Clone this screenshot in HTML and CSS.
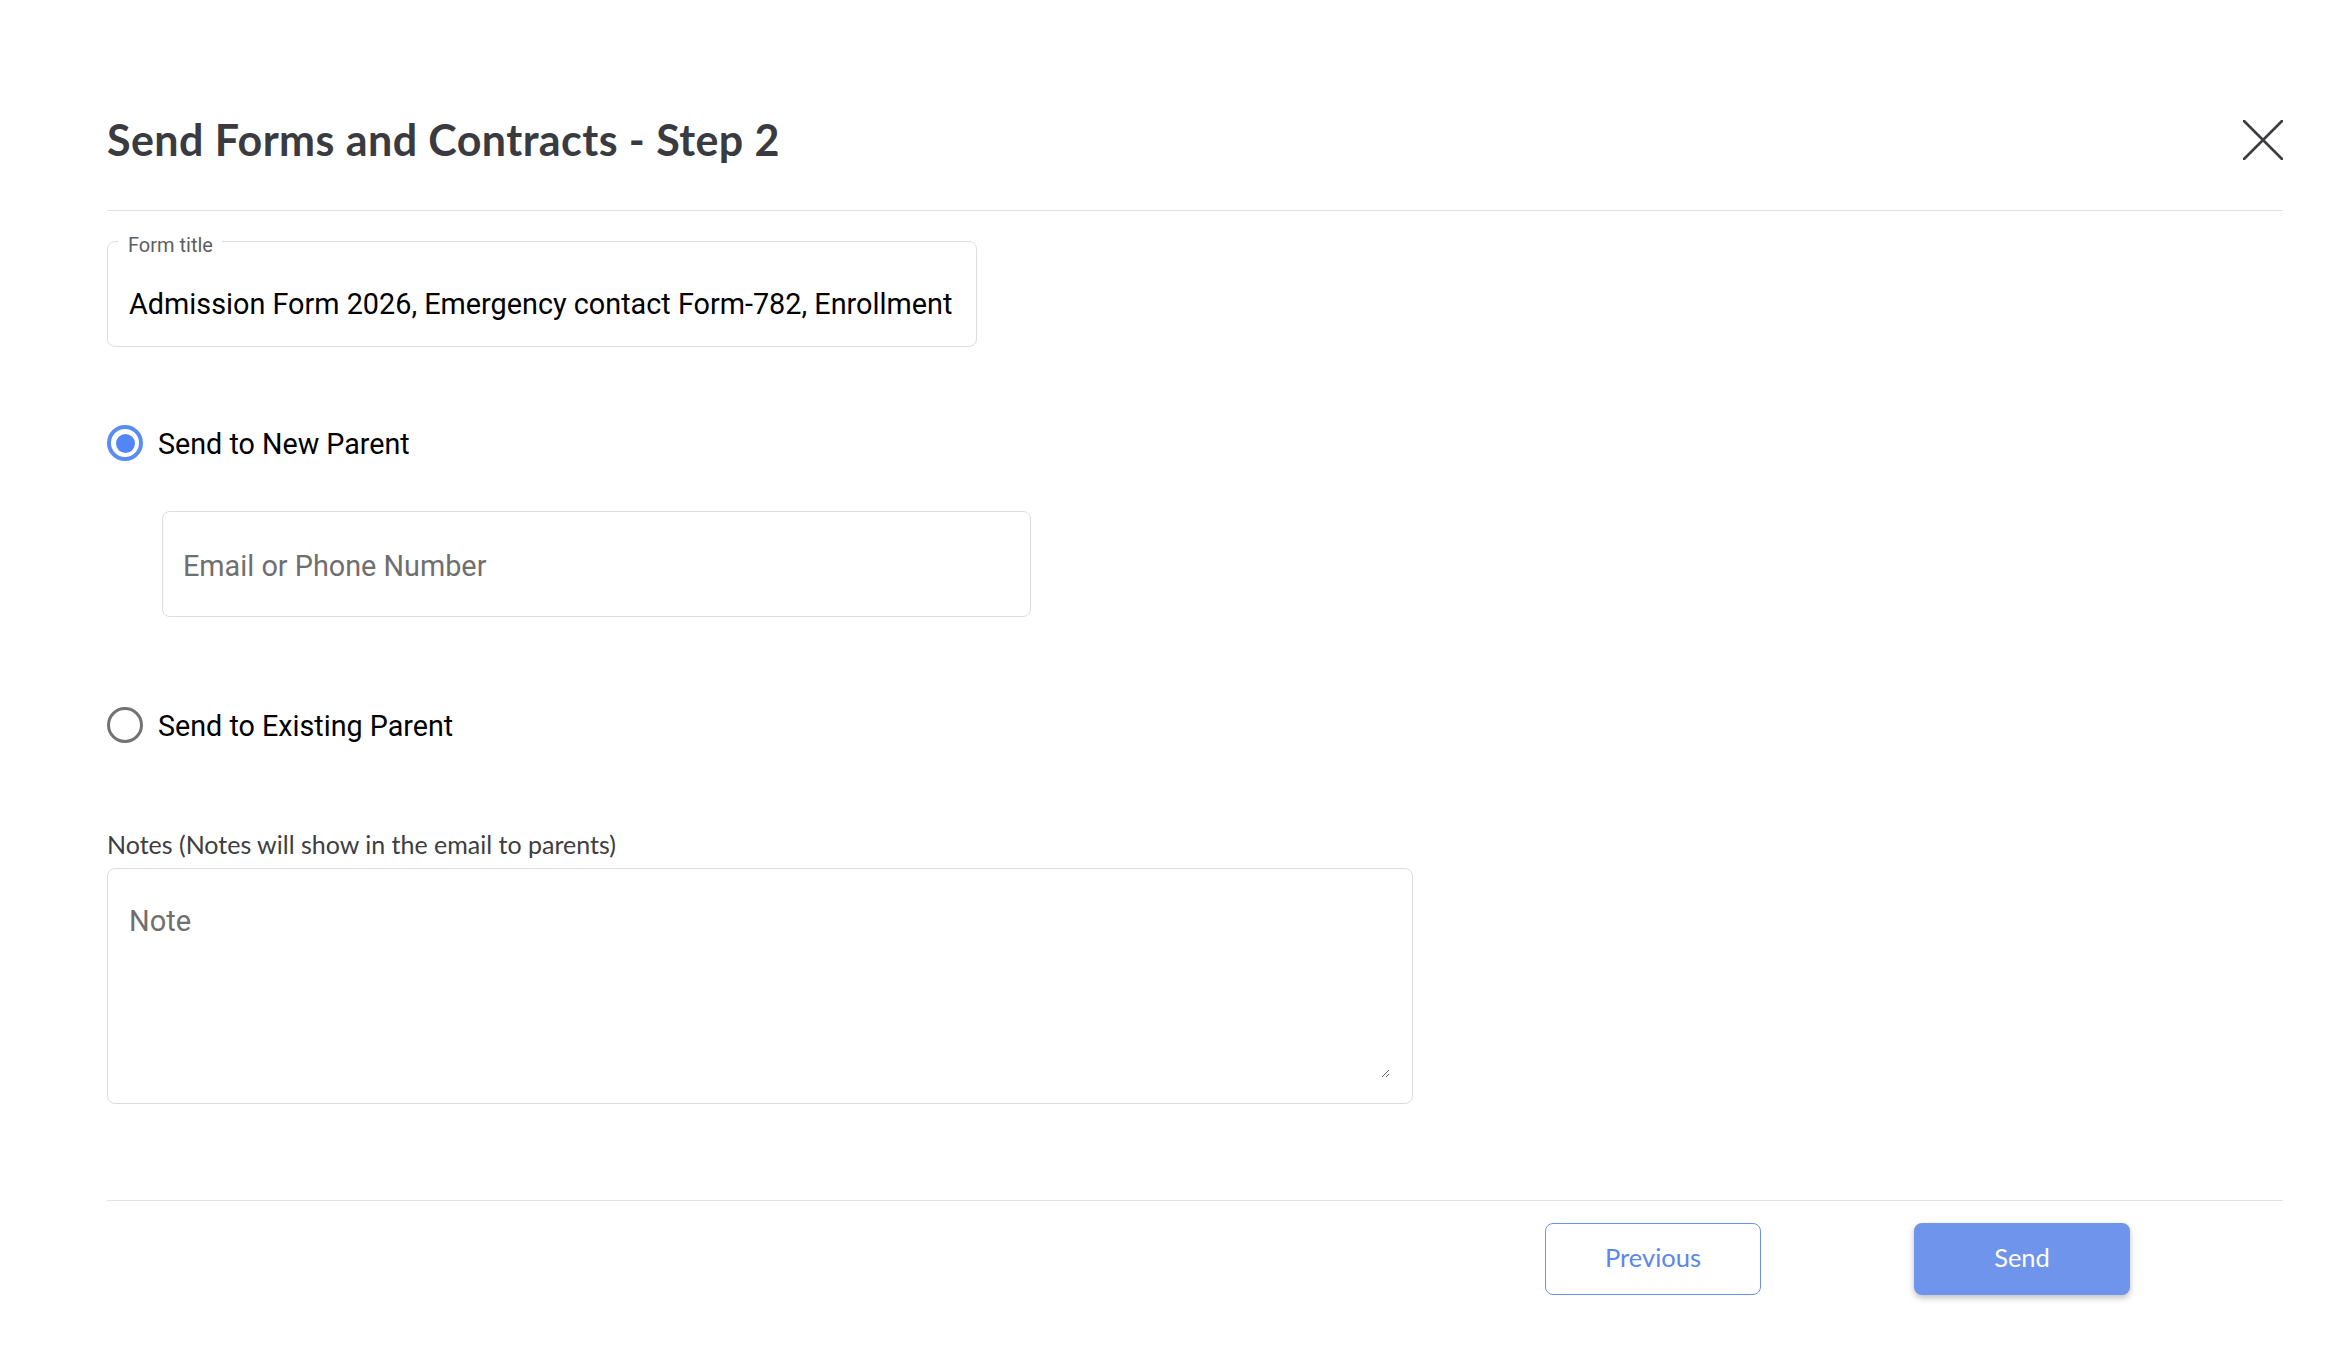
FILE: index.html
```html
<!DOCTYPE html>
<html lang="en">
<head>
<meta charset="utf-8">
<title>Send Forms and Contracts - Step 2</title>
<link rel="stylesheet" href="styles.css">
</head>
<body>
<div class="dialog">
  <header class="dialog-header">
    <h1 class="dialog-title">Send Forms and Contracts - Step 2</h1>
    <button class="close-btn" aria-label="Close">
      <svg width="40" height="40" viewBox="0 0 40 40"><path d="M1 1 L39 39 M39 1 L1 39" stroke="#3c3c41" stroke-width="2.6" stroke-linecap="round" fill="none"/></svg>
    </button>
  </header>

  <div class="outlined title-field">
    <span class="outlined-label">Form title</span>
    <input class="outlined-input" type="text" readonly value="Admission Form 2026, Emergency contact Form-782, Enrollment">
  </div>

  <label class="radio-row first-radio">
    <span class="radio checked"><span class="radio-dot"></span></span>
    <span class="radio-text">Send to New Parent</span>
  </label>

  <input class="email-input" type="text" placeholder="Email or Phone Number">

  <label class="radio-row second-radio">
    <span class="radio"></span>
    <span class="radio-text">Send to Existing Parent</span>
  </label>

  <div class="notes-label">Notes (Notes will show in the email to parents)</div>
  <div class="notes-box">
    <textarea class="notes-textarea" placeholder="Note"></textarea>
  </div>

  <footer class="dialog-footer">
    <button class="btn btn-outline">Previous</button>
    <button class="btn btn-primary">Send</button>
  </footer>
</div>
</body>
</html>
```

FILE: styles.css
```css
* { box-sizing: border-box; }

html, body {
  margin: 0;
  padding: 0;
  background: #ffffff;
}

body {
  font-family: Roboto, "Liberation Sans", sans-serif;
}

.dialog {
  width: 2350px;
  padding: 0 67px 0 107px;
}

.dialog-header {
  height: 211px;
  padding-top: 68px;
  display: flex;
  align-items: center;
  justify-content: space-between;
  border-bottom: 1px solid #e2e2e4;
}

.dialog-title {
  margin: 0;
  font-family: Lato, "Open Sans", sans-serif;
  font-weight: 700;
  font-size: 43px;
  color: #3a3b40;
  letter-spacing: 0.42px;
}

.close-btn {
  width: 40px;
  height: 40px;
  padding: 0;
  margin: 2px 0 0 0;
  border: none;
  background: transparent;
  display: flex;
}

.outlined {
  position: relative;
  width: 870px;
  height: 106px;
  margin-top: 30px;
  border: 1px solid #dedede;
  border-radius: 8px;
}

.outlined-label {
  position: absolute;
  top: -9px;
  left: 11px;
  padding: 0 9px;
  background: #ffffff;
  font-size: 20px;
  line-height: 24px;
  color: #5e5e5e;
}

.outlined-input {
  display: block;
  width: 100%;
  height: 100%;
  border: none;
  outline: none;
  background: transparent;
  padding: 44px 10px 24px 21px;
  font-family: Roboto, "Liberation Sans", sans-serif;
  font-size: 28.8px;
  color: #000000;
}

.radio-row {
  display: flex;
  align-items: center;
  gap: 15px;
  height: 36px;
}

.first-radio { margin-top: 78px; }
.second-radio { margin-top: 90px; }

.radio {
  width: 36px;
  height: 36px;
  border-radius: 50%;
  border: 3px solid #737373;
  display: flex;
  align-items: center;
  justify-content: center;
  flex: none;
}

.radio.checked {
  border: 4px solid #5b8cf2;
}

.radio-dot {
  width: 19px;
  height: 19px;
  border-radius: 50%;
  background: #5285f5;
}

.radio-text {
  font-size: 28.7px;
  line-height: 36px;
  padding-top: 1px;
  color: #000000;
}

.email-input {
  display: block;
  width: 869px;
  height: 106px;
  margin: 50px 0 0 55px;
  padding: 4px 20px 0 20px;
  border: 1px solid #dedede;
  border-radius: 8px;
  outline: none;
  font-family: Roboto, "Liberation Sans", sans-serif;
  font-size: 28.8px;
  color: #000000;
  background: #ffffff;
}

.email-input::placeholder,
.notes-textarea::placeholder {
  color: #6f6f6f;
  opacity: 1;
}

.notes-label {
  margin-top: 86px;
  font-family: Lato, "Open Sans", sans-serif;
  font-size: 25px;
  line-height: 30px;
  color: #3d3d42;
}

.notes-box {
  width: 1306px;
  height: 236px;
  margin-top: 9px;
  padding: 34px 22px 25px 21px;
  border: 1px solid #dedede;
  border-radius: 8px;
}

.notes-textarea {
  display: block;
  width: 100%;
  height: 100%;
  border: none;
  outline: none;
  padding: 0;
  margin: 0;
  resize: vertical;
  font-family: Roboto, "Liberation Sans", sans-serif;
  font-size: 29px;
  line-height: 36px;
  color: #000000;
  background: transparent;
}

.dialog-footer {
  margin-top: 96px;
  border-top: 1px solid #e2e2e4;
  padding: 22px 153px 40px 0;
  display: flex;
  justify-content: flex-end;
  gap: 153px;
}

.btn {
  width: 216px;
  height: 72px;
  border-radius: 8px;
  font-family: Lato, "Open Sans", sans-serif;
  font-size: 25.5px;
  padding: 0 0 5px 0;
  cursor: pointer;
}

.btn-outline {
  background: #ffffff;
  border: 1.5px solid #6a92ef;
  color: #5a86ee;
}

.btn-primary {
  background: #6f94ec;
  border: none;
  color: #ffffff;
  box-shadow: 0 3px 6px rgba(0, 0, 0, 0.25);
}
```
